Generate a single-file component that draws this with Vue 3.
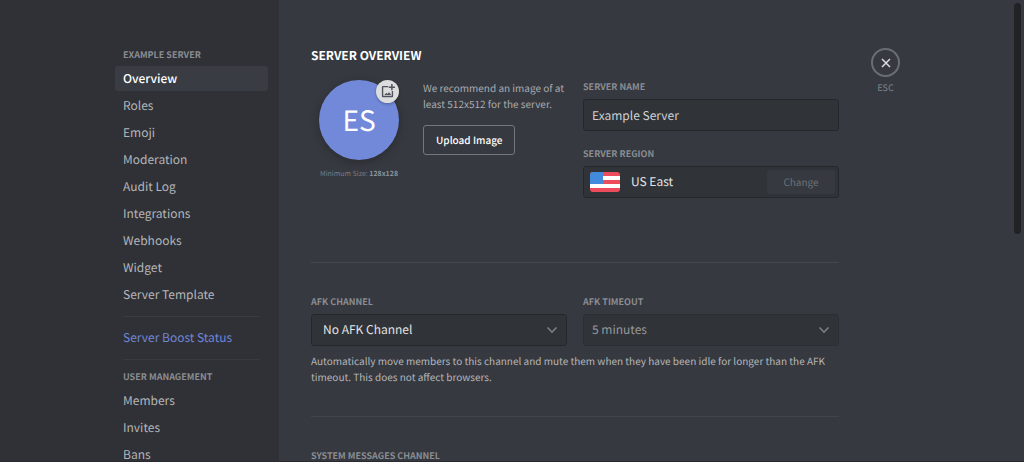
<script setup>
import { ref } from 'vue'

const serverPages = [
  'Overview', 'Roles', 'Emoji', 'Moderation', 'Audit Log',
  'Integrations', 'Webhooks', 'Widget', 'Server Template',
]
const userPages = ['Members', 'Invites', 'Bans']
const current = ref('Overview')
const serverName = ref('Example Server')
</script>

<template>
  <div class="app">
    <aside class="sidebar">
      <nav class="nav" aria-label="Server settings">
        <h2 class="nav-title">Example Server</h2>
        <ul class="nav-list">
          <li v-for="page in serverPages" :key="page">
            <a href="#" class="nav-item" :class="{ active: page === current }" @click.prevent="current = page">{{ page }}</a>
          </li>
        </ul>
        <hr class="nav-rule" />
        <a href="#" class="nav-item boost" @click.prevent>Server Boost Status</a>
        <hr class="nav-rule" />
        <h2 class="nav-title">User Management</h2>
        <ul class="nav-list">
          <li v-for="page in userPages" :key="page">
            <a href="#" class="nav-item" :class="{ active: page === current }" @click.prevent="current = page">{{ page }}</a>
          </li>
        </ul>
      </nav>
    </aside>

    <main class="content">
      <div class="column">
        <h1 class="title">Server Overview</h1>

        <section class="pair">
          <div class="identity">
            <div class="icon-block">
              <button class="avatar" type="button" aria-label="Change server icon">
                ES
                <span class="badge">
                  <svg viewBox="0 0 24 24" width="15" height="15" fill="#4f545c">
                    <path d="M13 3v2.200H5.200v13.600h13.600V11H21v8.500a1.500 1.500 0 0 1-1.500 1.500h-15A1.500 1.500 0 0 1 3 19.500v-15A1.500 1.500 0 0 1 4.500 3z" />
                    <path d="M7 17.500l3-3.500 2 2 2.500-3 3.500 4.500z" />
                    <path d="M17.800 0h2.400v3.800H24v2.400h-3.800V10h-2.400V6.200H14V3.800h3.800z" />
                  </svg>
                </span>
              </button>
              <p class="minimum">Minimum Size: <b>128x128</b></p>
            </div>
            <div class="upload">
              <p class="hint">We recommend an image of at least 512x512 for the server.</p>
              <button class="upload-button" type="button">Upload Image</button>
            </div>
          </div>

          <div class="fields">
            <div class="field">
              <label class="label" for="server-name">Server Name</label>
              <input id="server-name" v-model="serverName" class="box input" type="text" />
            </div>
            <div class="field">
              <span id="region-label" class="label">Server Region</span>
              <div class="box region" role="group" aria-labelledby="region-label">
                <svg class="flag" viewBox="0 0 30 20" width="30" height="20">
                  <defs><clipPath id="flag-clip"><rect width="30" height="20" rx="3" /></clipPath></defs>
                  <g clip-path="url(#flag-clip)">
                    <rect width="30" height="20" fill="#ed4c5c" />
                    <rect y="4" width="30" height="4" fill="#fff" />
                    <rect y="12" width="30" height="4" fill="#fff" />
                    <rect width="13" height="12" fill="#428bdc" />
                  </g>
                </svg>
                <span class="region-name">US East</span>
                <button class="change" type="button" disabled>Change</button>
              </div>
            </div>
          </div>
        </section>

        <section class="afk">
          <div class="pair">
            <div class="field">
              <label class="label" for="afk-channel">AFK Channel</label>
              <div class="select-wrap">
                <select id="afk-channel" class="box select strong">
                  <option>No AFK Channel</option>
                </select>
                <svg class="chevron" viewBox="0 0 12 8" width="12" height="8"><path d="M1.500 1.500l4.500 4.500 4.500-4.500" /></svg>
              </div>
            </div>
            <div class="field dim">
              <label class="label" for="afk-timeout">AFK Timeout</label>
              <div class="select-wrap">
                <select id="afk-timeout" class="box select" disabled>
                  <option>5 minutes</option>
                </select>
                <svg class="chevron" viewBox="0 0 12 8" width="12" height="8"><path d="M1.500 1.500l4.500 4.500 4.500-4.500" /></svg>
              </div>
            </div>
          </div>
          <p class="note">Automatically move members to this channel and mute them when they have been idle for longer than the AFK timeout. This does not affect browsers.</p>
        </section>

        <section class="system">
          <h2 class="label">System Messages Channel</h2>
        </section>
      </div>

      <div class="close">
        <button class="close-button" type="button" aria-label="Close settings">
          <svg viewBox="0 0 10 10" width="10" height="10"><path d="M1 1l8 8M9 1l-8 8" /></svg>
        </button>
        <span class="esc">ESC</span>
      </div>
      <div class="scroll-thumb"></div>
    </main>
  </div>
</template>

<style>
body {
  margin: 0;
  background: #36393f;
}
</style>

<style scoped>
.app,
.app * {
  box-sizing: border-box;
}
.app {
  display: flex;
  height: 100vh;
  overflow: hidden;
  border-bottom: 1px solid #292a30;
  background: #36393f;
  color: #b4b6ba;
  font-family: "Noto Sans CJK SC", Lato, sans-serif;
  font-size: 12px;
  line-height: 16px;
  text-rendering: geometricPrecision;
}
button,
input,
select {
  margin: 0;
  font: inherit;
  text-rendering: inherit;
}
h1, h2, p, ul {
  margin: 0;
  padding: 0;
}
.sidebar {
  display: flex;
  justify-content: flex-end;
  flex: 1 0 174px;
  padding: 46px 11px 0 0;
  background: #2f3136;
}
.nav {
  width: 153px;
}
.nav-title {
  margin: 0 8px 2px;
  color: #8a8d92;
  font-size: 9px;
  font-weight: 700;
  line-height: 18px;
  text-transform: uppercase;
}
.nav-list {
  display: flex;
  flex-direction: column;
  gap: 2px;
  list-style: none;
}
.nav-item {
  display: block;
  padding: 5px 8px 4px;
  border-radius: 3px;
  color: #b4b6ba;
  text-decoration: none;
}
.nav-item.active {
  background: #393c43;
  color: #fff;
  font-weight: 500;
}
.nav-item.boost {
  color: #6f86d6;
}
.nav-rule {
  height: 1px;
  margin: 9px 8px 8px;
  border: 0;
  background: #393b41;
}
.content {
  position: relative;
  display: flex;
  align-items: flex-start;
  flex: 1 1 640px;
  gap: 32px;
  min-width: 0;
  padding: 48px 32px 0;
}
.column {
  flex: 0 1 528px;
  min-width: 0;
}
.title {
  margin-bottom: 14px;
  color: #fff;
  font-size: 12px;
  font-weight: 700;
  text-transform: uppercase;
}
.pair {
  display: grid;
  grid-template-columns: 1fr 1fr;
  gap: 16px;
}
.identity {
  display: flex;
  gap: 24px;
  margin-right: -8px;
  padding: 2px 0 0 8px;
}
.icon-block {
  flex: 0 0 80px;
  width: 80px;
}
.avatar {
  position: relative;
  display: block;
  width: 80px;
  height: 80px;
  padding: 0;
  border: 0;
  border-radius: 50%;
  background: #7289da;
  box-shadow: 0 2px 8px rgba(0, 0, 0, 0.25);
  color: #fff;
  font-size: 28px;
  line-height: 80px;
}
.badge {
  position: absolute;
  top: 0;
  right: 0;
  display: flex;
  align-items: center;
  justify-content: center;
  width: 23px;
  height: 23px;
  border-radius: 50%;
  background: #dcddde;
  box-shadow: 0 1px 3px rgba(0, 0, 0, 0.3);
}
.minimum {
  margin-top: 6px;
  color: #7a7e85;
  font-size: 7px;
  text-align: center;
  white-space: nowrap;
}
.minimum b {
  color: #8b949e;
}
.hint {
  color: #a9abaf;
  font-size: 10px;
}
.upload-button {
  margin-top: 13px;
  padding: 6px 12px;
  border: 1px solid #75777c;
  border-radius: 3px;
  background: transparent;
  color: #fff;
  font-size: 10px;
  font-weight: 500;
}
.fields {
  display: flex;
  flex-direction: column;
  gap: 14px;
}
.label {
  display: block;
  margin-bottom: 3px;
  color: #8a8d92;
  font-size: 9px;
  font-weight: 700;
  line-height: 18px;
  text-transform: uppercase;
}
.box {
  width: 100%;
  height: 32px;
  border: 1px solid #25272b;
  border-radius: 3px;
  background: #303338;
  color: #cfd1d4;
}
.input {
  display: block;
  padding: 0 8px;
}
.region {
  display: flex;
  align-items: center;
  padding: 0 3px 0 6px;
}
.region-name {
  flex: 1;
  margin-left: 11px;
  color: #e3e4e6;
}
.change {
  width: 68px;
  height: 24px;
  padding: 0;
  border: 0;
  border-radius: 2px;
  background: #363940;
  color: #6c7179;
  font-size: 10px;
}
.afk {
  margin-top: 64px;
  padding: 30px 0 31px;
  border-top: 1px solid #44474d;
}
.system {
  padding-top: 30px;
  border-top: 1px solid #41444a;
}
.select-wrap {
  position: relative;
}
.select {
  display: block;
  padding: 0 32px 0 8px;
  appearance: none;
  opacity: 1;
}
.select.strong {
  padding-left: 11px;
  color: #e3e4e6;
}
.chevron {
  position: absolute;
  top: 12px;
  right: 9px;
  fill: none;
  stroke: #7b7e83;
  stroke-width: 1.6;
  pointer-events: none;
}
.dim .box {
  border-color: #2c2e33;
  color: #96989c;
}
.note {
  margin-top: 7px;
  font-size: 10px;
}
.close {
  display: flex;
  flex-direction: column;
  align-items: center;
  gap: 3px;
}
.close-button {
  display: flex;
  align-items: center;
  justify-content: center;
  width: 29px;
  height: 29px;
  padding: 0;
  border: 2px solid #6a6d74;
  border-radius: 50%;
  background: transparent;
}
.close-button path {
  fill: none;
  stroke: #dcddde;
  stroke-width: 1.5;
}
.esc {
  color: #72767d;
  font-size: 9px;
  font-weight: 500;
}
.scroll-thumb {
  position: absolute;
  top: 3px;
  right: 3px;
  width: 7px;
  height: 50%;
  border-radius: 4px;
  background: #202225;
}
</style>
